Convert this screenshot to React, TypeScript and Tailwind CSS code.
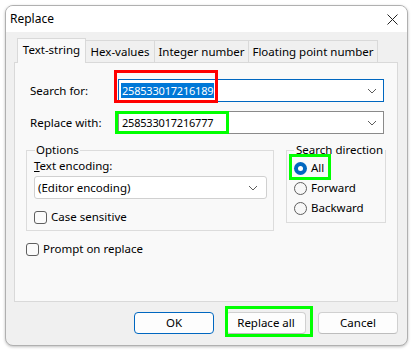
import React from "react"

function Chevron() {
    return (
        <svg width="10" height="6" viewBox="0 0 10 6" className="shrink-0">
            <path d="M1 1l4 4 4-4" fill="none" stroke="#5c5c5c" strokeWidth="1" />
        </svg>
    )
}

function Checkbox({ label }: { label: string }) {
    return (
        <div className="flex items-center h-[16px] gap-[4px]">
            <div className="w-[13px] h-[13px] rounded-[3px] border border-[#5f5f5f] bg-[#fbfbfb] shrink-0" />
            <span>{label}</span>
        </div>
    )
}

function Radio({ label, checked, children }: { label: string; checked?: boolean; children?: React.ReactNode }) {
    return (
        <div className="relative flex items-center h-[20px] gap-[4px]">
            {checked ? (
                <div className="w-[13px] h-[13px] rounded-full bg-[#0067c0] flex items-center justify-center shrink-0">
                    <div className="w-[5px] h-[5px] rounded-full bg-white" />
                </div>
            ) : (
                <div className="w-[13px] h-[13px] rounded-full border border-[#5f5f5f] bg-[#f7f7f7] shrink-0" />
            )}
            <span>{label}</span>
            {children}
        </div>
    )
}

const tabs = [
    { label: "Text-string", w: "w-[69px]", active: true },
    { label: "Hex-values", w: "w-[70px]" },
    { label: "Integer number", w: "w-[95px]" },
    { label: "Floating point number", w: "w-[130px]" },
]

export default function App() {
    return (
        <div className="w-[414px] h-[350px] bg-white pt-[5px] pl-[5px] font-['Noto_Sans',sans-serif] text-[11.5px] text-black">
            <div className="w-[403px] h-[341px] border border-[#b0b0b0] rounded-[8px] overflow-hidden flex flex-col bg-[#f0f0f0] shadow-[0_1px_3px_rgba(0,0,0,0.25)]">
                {/* Title bar */}
                <div className="h-[26px] bg-white flex items-center justify-between pl-[4px] pr-[9px] shrink-0">
                    <span className="text-[12px]">Replace</span>
                    <svg width="11" height="11" viewBox="0 0 11 11">
                        <path d="M0.5 0.5l10 10M10.5 0.5l-10 10" stroke="#222" strokeWidth="1" />
                    </svg>
                </div>

                <div className="flex-1 pl-[8px] pr-[9px] pt-[6px]">
                    {/* Tabs */}
                    <div className="h-[24px] flex items-end pl-[3px]">
                        {tabs.map((t) =>
                            t.active ? (
                                <div
                                    key={t.label}
                                    className={`relative z-10 ${t.w} h-[25px] -mb-[1px] bg-[#f9f9f9] border-t border-l border-r border-[#d9d9d9] flex items-center justify-center pb-[2px]`}
                                >
                                    {t.label}
                                </div>
                            ) : (
                                <div
                                    key={t.label}
                                    className={`${t.w} h-[22px] -ml-[1px] bg-[#f0f0f0] border-t border-l border-r border-[#d9d9d9] flex items-center justify-center`}
                                >
                                    {t.label}
                                </div>
                            )
                        )}
                    </div>

                    {/* Panel */}
                    <div className="w-[384px] h-[240px] border border-[#d9d9d9] bg-[#f9f9f9] pt-[16px] pl-[15px]">
                        <div className="flex items-center">
                            <span className="w-[88px]">Search for:</span>
                            <div className="relative w-[266px] h-[23px] bg-white border border-[#0067c0] flex items-center justify-between pl-[2px] pr-[6px]">
                                <span className="bg-[#0078d7] text-white text-[11px] tracking-[-0.2px] leading-[15px] px-[1px]">258533017216189</span>
                                <Chevron />
                                <div className="absolute left-[-5px] top-[-10px] w-[104px] h-[33px] border-[3px] border-[#ff0000]" />
                            </div>
                        </div>
                        <div className="flex items-center mt-[9px]">
                            <span className="w-[88px]">Replace with:</span>
                            <div className="relative w-[266px] h-[23px] bg-white border border-[#8a8a8a] flex items-center justify-between pl-[3px] pr-[6px]">
                                <span className="text-[11px] tracking-[-0.2px] leading-[15px]">258533017216777</span>
                                <Chevron />
                                <div className="absolute left-[-4px] top-[-1px] w-[114px] h-[23px] border-[3px] border-[#00ff00]" />
                            </div>
                        </div>

                        <div className="flex items-start mt-[8px] -ml-[4px] gap-[12px]">
                            <fieldset className="w-[248px] shrink-0 border border-[#dcdcdc] pl-[7px] pr-[6px] pb-[5px]">
                                <legend className="ml-[1px] px-[1px] leading-[16px]">Options</legend>
                                <div className="leading-[16px]">
                                    <span className="underline">T</span>ext encoding:
                                </div>
                                <div className="mt-[2px] w-[233px] h-[23px] bg-white border border-[#d0d0d0] rounded-[3px] flex items-center justify-between pl-[3px] pr-[8px]">
                                    <span>(Editor encoding)</span>
                                    <Chevron />
                                </div>
                                <div className="mt-[10px]">
                                    <Checkbox label="Case sensitive" />
                                </div>
                            </fieldset>

                            <fieldset className="w-[98px] shrink-0 border border-[#dcdcdc] pl-[7px] pb-[4px]">
                                <legend className="px-[2px] leading-[16px] whitespace-nowrap">Search direction</legend>
                                <Radio label="All" checked>
                                    <div className="absolute left-[-5px] top-[-4px] w-[42px] h-[26px] border-[3px] border-[#00ff00]" />
                                </Radio>
                                <Radio label="Forward" />
                                <Radio label="Backward" />
                            </fieldset>
                        </div>

                        <div className="mt-[10px] -ml-[4px]">
                            <Checkbox label="Prompt on replace" />
                        </div>
                    </div>

                    {/* Buttons */}
                    <div className="mt-[10px] flex justify-end gap-[12px]">
                        <div className="w-[80px] h-[22px] rounded-[4px] border border-[#0067c0] bg-[#fdfdfd] flex items-center justify-center">OK</div>
                        <div className="relative w-[80px] h-[22px] rounded-[4px] border border-[#d0d0d0] border-b-[#bdbdbd] bg-[#fdfdfd] flex items-center justify-center">
                            Replace all
                            <div className="absolute left-[-2px] top-[-7px] w-[88px] h-[31px] border-[3px] border-[#00ff00]" />
                        </div>
                        <div className="w-[80px] h-[22px] rounded-[4px] border border-[#d0d0d0] border-b-[#bdbdbd] bg-[#fdfdfd] flex items-center justify-center">Cancel</div>
                    </div>
                </div>
            </div>
        </div>
    )
}
